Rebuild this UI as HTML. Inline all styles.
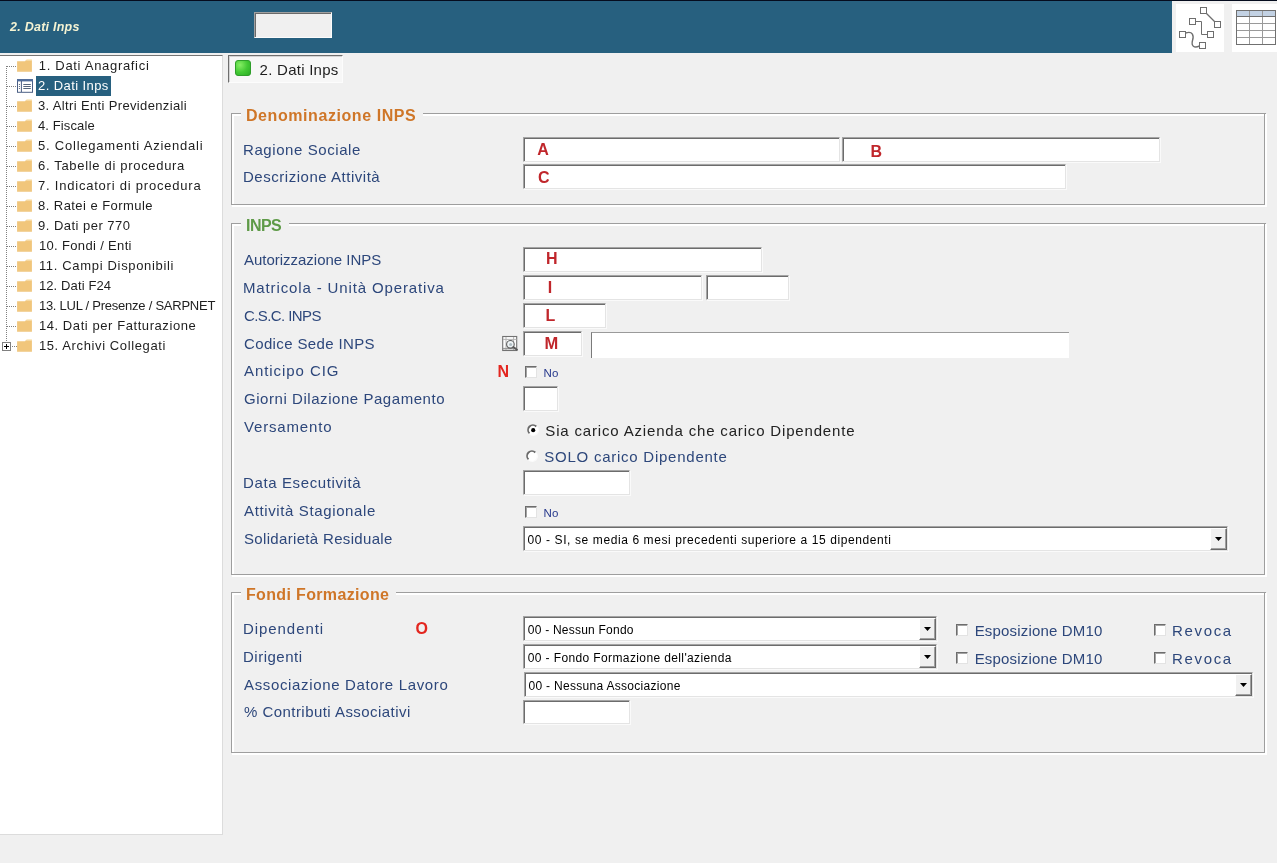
<!DOCTYPE html>
<html lang="it"><head><meta charset="utf-8"><title>2. Dati Inps</title>
<style>
html,body{margin:0;padding:0}
body{width:1277px;height:863px;background:#f0f0f0;position:relative;overflow:hidden;font-family:"Liberation Sans",sans-serif}
</style></head><body>
<div style="position:absolute;left:0px;top:0px;width:1277px;height:1px;background:#050c1e"></div>
<div style="position:absolute;left:0px;top:1px;width:1172px;height:52px;background:#27607f"></div>
<div style="position:absolute;left:254px;top:12px;width:78px;height:26px;box-sizing:border-box;background:#f0f0f0;border:1px solid;border-color:#a0a0a0 #fcfcfc #fcfcfc #a0a0a0;box-shadow:inset 1px 1px 0 #6a6a6a"></div>
<svg width="48" height="48" viewBox="1176 4 48 48" style="position:absolute;left:1176px;top:4px">
<rect x="1176" y="4" width="48" height="48" fill="#fff"/>
<g fill="none" stroke="#6e6e6e" stroke-width="1">
<path d="M1206.5 13.5 L1214.5 21.5" stroke-width="1.3"/>
<path d="M1195.5 21.5 H1201.5 V34.5 H1207.5"/>
<path d="M1185.5 33 C1193 30.5 1194 36 1192.5 40.5 C1191 46 1194 48.5 1199.5 46" stroke-width="1.4"/>
<g fill="#fff">
<rect x="1200.5" y="7.5" width="6" height="6"/>
<rect x="1189.5" y="18.5" width="6" height="6"/>
<rect x="1214.5" y="21.5" width="6" height="6"/>
<rect x="1179.5" y="31.5" width="6" height="6"/>
<rect x="1207.5" y="31.5" width="6" height="6"/>
<rect x="1199.5" y="42.5" width="6" height="6"/>
</g></g></svg>
<svg width="45" height="48" viewBox="1232 4 45 48" style="position:absolute;left:1232px;top:4px">
<rect x="1232" y="4" width="45" height="48" fill="#fff"/>
<rect x="1236.5" y="10.5" width="39" height="6" fill="#c3d2e4"/>
<g fill="none" stroke="#9a9a9a" stroke-width="1">
<path d="M1236.5 23.5 H1275.5 M1236.5 30.5 H1275.5 M1236.5 37.5 H1275.5 M1249.5 10.5 V44.5 M1262.5 10.5 V44.5"/>
</g>
<g fill="none" stroke="#707070" stroke-width="1">
<path d="M1236.5 16.5 H1275.5"/>
<rect x="1236.5" y="10.5" width="39" height="34"/>
</g></svg>
<div style="position:absolute;left:0px;top:55px;width:223px;height:780px;box-sizing:border-box;background:#fff;border-top:1px solid #747474;border-right:1px solid #dcdcdc;border-bottom:1px solid #dcdcdc"></div>
<div style="position:absolute;left:6px;top:66px;width:1px;height:275px;background-image:linear-gradient(to bottom,#808080 50%,transparent 50%);background-size:1px 2px"></div>
<div style="position:absolute;left:7px;top:66px;width:10px;height:1px;background-image:linear-gradient(to right,#808080 50%,transparent 50%);background-size:2px 1px"></div>
<div style="position:absolute;left:7px;top:86px;width:10px;height:1px;background-image:linear-gradient(to right,#808080 50%,transparent 50%);background-size:2px 1px"></div>
<div style="position:absolute;left:7px;top:106px;width:10px;height:1px;background-image:linear-gradient(to right,#808080 50%,transparent 50%);background-size:2px 1px"></div>
<div style="position:absolute;left:7px;top:126px;width:10px;height:1px;background-image:linear-gradient(to right,#808080 50%,transparent 50%);background-size:2px 1px"></div>
<div style="position:absolute;left:7px;top:146px;width:10px;height:1px;background-image:linear-gradient(to right,#808080 50%,transparent 50%);background-size:2px 1px"></div>
<div style="position:absolute;left:7px;top:166px;width:10px;height:1px;background-image:linear-gradient(to right,#808080 50%,transparent 50%);background-size:2px 1px"></div>
<div style="position:absolute;left:7px;top:186px;width:10px;height:1px;background-image:linear-gradient(to right,#808080 50%,transparent 50%);background-size:2px 1px"></div>
<div style="position:absolute;left:7px;top:206px;width:10px;height:1px;background-image:linear-gradient(to right,#808080 50%,transparent 50%);background-size:2px 1px"></div>
<div style="position:absolute;left:7px;top:226px;width:10px;height:1px;background-image:linear-gradient(to right,#808080 50%,transparent 50%);background-size:2px 1px"></div>
<div style="position:absolute;left:7px;top:246px;width:10px;height:1px;background-image:linear-gradient(to right,#808080 50%,transparent 50%);background-size:2px 1px"></div>
<div style="position:absolute;left:7px;top:266px;width:10px;height:1px;background-image:linear-gradient(to right,#808080 50%,transparent 50%);background-size:2px 1px"></div>
<div style="position:absolute;left:7px;top:286px;width:10px;height:1px;background-image:linear-gradient(to right,#808080 50%,transparent 50%);background-size:2px 1px"></div>
<div style="position:absolute;left:7px;top:306px;width:10px;height:1px;background-image:linear-gradient(to right,#808080 50%,transparent 50%);background-size:2px 1px"></div>
<div style="position:absolute;left:7px;top:326px;width:10px;height:1px;background-image:linear-gradient(to right,#808080 50%,transparent 50%);background-size:2px 1px"></div>
<div style="position:absolute;left:12px;top:346px;width:5px;height:1px;background-image:linear-gradient(to right,#808080 50%,transparent 50%);background-size:2px 1px"></div>
<div style="position:absolute;left:36px;top:76px;width:75px;height:20px;background:#27607f"></div>
<svg width="16" height="14" viewBox="0 0 16 14" style="position:absolute;left:17px;top:59px">
<path d="M0.1 2.2 H8.1 L9.0 0.9 H14.9 V12.6 H0.1 Z" fill="#f1c67b"/>
<path d="M9.0 1.5 L9.6 0.1 H14.9 V1.5 Z" fill="#fbecc9"/>
<rect x="0.1" y="11.6" width="14.8" height="1" fill="#f0cb8c"/>
</svg>
<svg width="16" height="14" viewBox="0 0 16 14" style="position:absolute;left:17px;top:99px">
<path d="M0.1 2.2 H8.1 L9.0 0.9 H14.9 V12.6 H0.1 Z" fill="#f1c67b"/>
<path d="M9.0 1.5 L9.6 0.1 H14.9 V1.5 Z" fill="#fbecc9"/>
<rect x="0.1" y="11.6" width="14.8" height="1" fill="#f0cb8c"/>
</svg>
<svg width="16" height="14" viewBox="0 0 16 14" style="position:absolute;left:17px;top:119px">
<path d="M0.1 2.2 H8.1 L9.0 0.9 H14.9 V12.6 H0.1 Z" fill="#f1c67b"/>
<path d="M9.0 1.5 L9.6 0.1 H14.9 V1.5 Z" fill="#fbecc9"/>
<rect x="0.1" y="11.6" width="14.8" height="1" fill="#f0cb8c"/>
</svg>
<svg width="16" height="14" viewBox="0 0 16 14" style="position:absolute;left:17px;top:139px">
<path d="M0.1 2.2 H8.1 L9.0 0.9 H14.9 V12.6 H0.1 Z" fill="#f1c67b"/>
<path d="M9.0 1.5 L9.6 0.1 H14.9 V1.5 Z" fill="#fbecc9"/>
<rect x="0.1" y="11.6" width="14.8" height="1" fill="#f0cb8c"/>
</svg>
<svg width="16" height="14" viewBox="0 0 16 14" style="position:absolute;left:17px;top:159px">
<path d="M0.1 2.2 H8.1 L9.0 0.9 H14.9 V12.6 H0.1 Z" fill="#f1c67b"/>
<path d="M9.0 1.5 L9.6 0.1 H14.9 V1.5 Z" fill="#fbecc9"/>
<rect x="0.1" y="11.6" width="14.8" height="1" fill="#f0cb8c"/>
</svg>
<svg width="16" height="14" viewBox="0 0 16 14" style="position:absolute;left:17px;top:179px">
<path d="M0.1 2.2 H8.1 L9.0 0.9 H14.9 V12.6 H0.1 Z" fill="#f1c67b"/>
<path d="M9.0 1.5 L9.6 0.1 H14.9 V1.5 Z" fill="#fbecc9"/>
<rect x="0.1" y="11.6" width="14.8" height="1" fill="#f0cb8c"/>
</svg>
<svg width="16" height="14" viewBox="0 0 16 14" style="position:absolute;left:17px;top:199px">
<path d="M0.1 2.2 H8.1 L9.0 0.9 H14.9 V12.6 H0.1 Z" fill="#f1c67b"/>
<path d="M9.0 1.5 L9.6 0.1 H14.9 V1.5 Z" fill="#fbecc9"/>
<rect x="0.1" y="11.6" width="14.8" height="1" fill="#f0cb8c"/>
</svg>
<svg width="16" height="14" viewBox="0 0 16 14" style="position:absolute;left:17px;top:219px">
<path d="M0.1 2.2 H8.1 L9.0 0.9 H14.9 V12.6 H0.1 Z" fill="#f1c67b"/>
<path d="M9.0 1.5 L9.6 0.1 H14.9 V1.5 Z" fill="#fbecc9"/>
<rect x="0.1" y="11.6" width="14.8" height="1" fill="#f0cb8c"/>
</svg>
<svg width="16" height="14" viewBox="0 0 16 14" style="position:absolute;left:17px;top:239px">
<path d="M0.1 2.2 H8.1 L9.0 0.9 H14.9 V12.6 H0.1 Z" fill="#f1c67b"/>
<path d="M9.0 1.5 L9.6 0.1 H14.9 V1.5 Z" fill="#fbecc9"/>
<rect x="0.1" y="11.6" width="14.8" height="1" fill="#f0cb8c"/>
</svg>
<svg width="16" height="14" viewBox="0 0 16 14" style="position:absolute;left:17px;top:259px">
<path d="M0.1 2.2 H8.1 L9.0 0.9 H14.9 V12.6 H0.1 Z" fill="#f1c67b"/>
<path d="M9.0 1.5 L9.6 0.1 H14.9 V1.5 Z" fill="#fbecc9"/>
<rect x="0.1" y="11.6" width="14.8" height="1" fill="#f0cb8c"/>
</svg>
<svg width="16" height="14" viewBox="0 0 16 14" style="position:absolute;left:17px;top:279px">
<path d="M0.1 2.2 H8.1 L9.0 0.9 H14.9 V12.6 H0.1 Z" fill="#f1c67b"/>
<path d="M9.0 1.5 L9.6 0.1 H14.9 V1.5 Z" fill="#fbecc9"/>
<rect x="0.1" y="11.6" width="14.8" height="1" fill="#f0cb8c"/>
</svg>
<svg width="16" height="14" viewBox="0 0 16 14" style="position:absolute;left:17px;top:299px">
<path d="M0.1 2.2 H8.1 L9.0 0.9 H14.9 V12.6 H0.1 Z" fill="#f1c67b"/>
<path d="M9.0 1.5 L9.6 0.1 H14.9 V1.5 Z" fill="#fbecc9"/>
<rect x="0.1" y="11.6" width="14.8" height="1" fill="#f0cb8c"/>
</svg>
<svg width="16" height="14" viewBox="0 0 16 14" style="position:absolute;left:17px;top:319px">
<path d="M0.1 2.2 H8.1 L9.0 0.9 H14.9 V12.6 H0.1 Z" fill="#f1c67b"/>
<path d="M9.0 1.5 L9.6 0.1 H14.9 V1.5 Z" fill="#fbecc9"/>
<rect x="0.1" y="11.6" width="14.8" height="1" fill="#f0cb8c"/>
</svg>
<svg width="16" height="14" viewBox="0 0 16 14" style="position:absolute;left:17px;top:339px">
<path d="M0.1 2.2 H8.1 L9.0 0.9 H14.9 V12.6 H0.1 Z" fill="#f1c67b"/>
<path d="M9.0 1.5 L9.6 0.1 H14.9 V1.5 Z" fill="#fbecc9"/>
<rect x="0.1" y="11.6" width="14.8" height="1" fill="#f0cb8c"/>
</svg>
<svg width="17" height="15" viewBox="0 0 17 15" style="position:absolute;left:17px;top:79px">
<rect x="0.5" y="0.7" width="15" height="12.6" fill="#fff" stroke="#4b5f85"/>
<rect x="0" y="0.2" width="16" height="2.2" fill="#4f6c9c"/>
<path d="M4.4 2 V13" stroke="#4b5f85" fill="none"/>
<path d="M6.3 5.5 H13.8 M6.3 7.5 H13.8 M6.3 9.5 H13.8" stroke="#56657c" fill="none" stroke-width="1"/>
<path d="M1.9 5.5 H2.9 M1.9 7.5 H2.9 M1.9 9.5 H2.9" stroke="#56657c" fill="none" stroke-width="1"/>
</svg>
<svg width="9" height="9" viewBox="0 0 9 9" style="position:absolute;left:2px;top:342px">
<rect x="0.5" y="0.5" width="8" height="8" fill="#fff" stroke="#808080"/>
<path d="M2 4.5 H7 M4.5 2 V7" stroke="#000" fill="none"/></svg>
<div style="position:absolute;left:228px;top:55px;width:115px;height:28px;box-sizing:border-box;background:#f7f7f7;border:1px solid;border-color:#6e6e6e #fcfcfc #fcfcfc #6e6e6e;box-shadow:inset 1px 1px 0 #d4d4d4"></div>
<svg width="18" height="18" viewBox="0 0 18 18" style="position:absolute;left:234.3px;top:59px">
<defs><radialGradient id="gg" cx="0.3" cy="0.3" r="0.9"><stop offset="0" stop-color="#86ee64"/><stop offset="0.55" stop-color="#43c934"/><stop offset="1" stop-color="#2cae25"/></radialGradient></defs>
<rect x="1.5" y="1.5" width="15" height="15" rx="2.5" fill="url(#gg)" stroke="#2f9e2a" stroke-width="1"/></svg>
<div style="position:absolute;left:232px;top:114px;width:1035px;height:93px;box-sizing:border-box;border:2px solid #ffffff"></div>
<div style="position:absolute;left:231px;top:113px;width:1034px;height:92px;box-sizing:border-box;border:1px solid #9e9e9e"></div>
<div style="position:absolute;left:1264px;top:113px;width:2px;height:1px;background:#9e9e9e"></div>
<div style="position:absolute;left:241px;top:112px;width:182px;height:5px;background:#f0f0f0"></div>
<div style="position:absolute;left:232px;top:224px;width:1035px;height:353px;box-sizing:border-box;border:2px solid #ffffff"></div>
<div style="position:absolute;left:231px;top:223px;width:1034px;height:352px;box-sizing:border-box;border:1px solid #9e9e9e"></div>
<div style="position:absolute;left:1264px;top:223px;width:2px;height:1px;background:#9e9e9e"></div>
<div style="position:absolute;left:241px;top:222px;width:48px;height:5px;background:#f0f0f0"></div>
<div style="position:absolute;left:232px;top:593px;width:1035px;height:162px;box-sizing:border-box;border:2px solid #ffffff"></div>
<div style="position:absolute;left:231px;top:592px;width:1034px;height:161px;box-sizing:border-box;border:1px solid #9e9e9e"></div>
<div style="position:absolute;left:1264px;top:592px;width:2px;height:1px;background:#9e9e9e"></div>
<div style="position:absolute;left:241px;top:591px;width:155px;height:5px;background:#f0f0f0"></div>
<div style="position:absolute;left:523px;top:137px;width:317px;height:25px;box-sizing:border-box;background:#fff;border:1px solid;border-color:#a4a4a4 #e4e4e4 #e4e4e4 #a4a4a4;box-shadow:inset 1px 1px 0 #6c6c6c, 1px 1px 0 #fafafa"></div>
<div style="position:absolute;left:842px;top:137px;width:318px;height:25px;box-sizing:border-box;background:#fff;border:1px solid;border-color:#a4a4a4 #e4e4e4 #e4e4e4 #a4a4a4;box-shadow:inset 1px 1px 0 #6c6c6c, 1px 1px 0 #fafafa"></div>
<div style="position:absolute;left:523px;top:164px;width:543px;height:25px;box-sizing:border-box;background:#fff;border:1px solid;border-color:#a4a4a4 #e4e4e4 #e4e4e4 #a4a4a4;box-shadow:inset 1px 1px 0 #6c6c6c, 1px 1px 0 #fafafa"></div>
<div style="position:absolute;left:523px;top:247px;width:239px;height:25px;box-sizing:border-box;background:#fff;border:1px solid;border-color:#a4a4a4 #e4e4e4 #e4e4e4 #a4a4a4;box-shadow:inset 1px 1px 0 #6c6c6c, 1px 1px 0 #fafafa"></div>
<div style="position:absolute;left:523px;top:275px;width:179px;height:25px;box-sizing:border-box;background:#fff;border:1px solid;border-color:#a4a4a4 #e4e4e4 #e4e4e4 #a4a4a4;box-shadow:inset 1px 1px 0 #6c6c6c, 1px 1px 0 #fafafa"></div>
<div style="position:absolute;left:706px;top:275px;width:83px;height:25px;box-sizing:border-box;background:#fff;border:1px solid;border-color:#a4a4a4 #e4e4e4 #e4e4e4 #a4a4a4;box-shadow:inset 1px 1px 0 #6c6c6c, 1px 1px 0 #fafafa"></div>
<div style="position:absolute;left:523px;top:303px;width:83px;height:25px;box-sizing:border-box;background:#fff;border:1px solid;border-color:#a4a4a4 #e4e4e4 #e4e4e4 #a4a4a4;box-shadow:inset 1px 1px 0 #6c6c6c, 1px 1px 0 #fafafa"></div>
<div style="position:absolute;left:523px;top:331px;width:59px;height:25px;box-sizing:border-box;background:#fff;border:1px solid;border-color:#a4a4a4 #e4e4e4 #e4e4e4 #a4a4a4;box-shadow:inset 1px 1px 0 #6c6c6c, 1px 1px 0 #fafafa"></div>
<div style="position:absolute;left:591px;top:332px;width:478px;height:26px;box-sizing:border-box;background:#fff;border-style:solid;border-width:1px 0 0 1px;border-color:#9a9a9a #fff #fff #7a7a7a"></div>
<div style="position:absolute;left:523px;top:386px;width:35px;height:25px;box-sizing:border-box;background:#fff;border:1px solid;border-color:#a4a4a4 #e4e4e4 #e4e4e4 #a4a4a4;box-shadow:inset 1px 1px 0 #6c6c6c, 1px 1px 0 #fafafa"></div>
<div style="position:absolute;left:523px;top:470px;width:107px;height:25px;box-sizing:border-box;background:#fff;border:1px solid;border-color:#a4a4a4 #e4e4e4 #e4e4e4 #a4a4a4;box-shadow:inset 1px 1px 0 #6c6c6c, 1px 1px 0 #fafafa"></div>
<div style="position:absolute;left:523px;top:700px;width:107px;height:24px;box-sizing:border-box;background:#fff;border:1px solid;border-color:#a4a4a4 #e4e4e4 #e4e4e4 #a4a4a4;box-shadow:inset 1px 1px 0 #6c6c6c, 1px 1px 0 #fafafa"></div>
<div style="position:absolute;left:523px;top:526px;width:705px;height:25px;box-sizing:border-box;background:#fff;border:1px solid;border-color:#a4a4a4 #e4e4e4 #e4e4e4 #a4a4a4;box-shadow:inset 1px 1px 0 #6c6c6c, 1px 1px 0 #fafafa"></div>
<div style="position:absolute;left:1210px;top:528px;width:17px;height:22px;box-sizing:border-box;background:#f0f0f0;border:1px solid;border-color:#ffffff #696969 #696969 #ffffff;box-shadow:inset -1px -1px 0 #a0a0a0"><svg width="7" height="4" viewBox="0 0 7 4" style="position:absolute;left:4px;top:8px"><path d="M0 0 H7 L3.5 4 Z" fill="#000"/></svg></div>
<div style="position:absolute;left:523px;top:616px;width:414px;height:25px;box-sizing:border-box;background:#fff;border:1px solid;border-color:#a4a4a4 #e4e4e4 #e4e4e4 #a4a4a4;box-shadow:inset 1px 1px 0 #6c6c6c, 1px 1px 0 #fafafa"></div>
<div style="position:absolute;left:919px;top:618px;width:17px;height:22px;box-sizing:border-box;background:#f0f0f0;border:1px solid;border-color:#ffffff #696969 #696969 #ffffff;box-shadow:inset -1px -1px 0 #a0a0a0"><svg width="7" height="4" viewBox="0 0 7 4" style="position:absolute;left:4px;top:8px"><path d="M0 0 H7 L3.5 4 Z" fill="#000"/></svg></div>
<div style="position:absolute;left:523px;top:644px;width:414px;height:25px;box-sizing:border-box;background:#fff;border:1px solid;border-color:#a4a4a4 #e4e4e4 #e4e4e4 #a4a4a4;box-shadow:inset 1px 1px 0 #6c6c6c, 1px 1px 0 #fafafa"></div>
<div style="position:absolute;left:919px;top:646px;width:17px;height:22px;box-sizing:border-box;background:#f0f0f0;border:1px solid;border-color:#ffffff #696969 #696969 #ffffff;box-shadow:inset -1px -1px 0 #a0a0a0"><svg width="7" height="4" viewBox="0 0 7 4" style="position:absolute;left:4px;top:8px"><path d="M0 0 H7 L3.5 4 Z" fill="#000"/></svg></div>
<div style="position:absolute;left:524px;top:672px;width:729px;height:25px;box-sizing:border-box;background:#fff;border:1px solid;border-color:#a4a4a4 #e4e4e4 #e4e4e4 #a4a4a4;box-shadow:inset 1px 1px 0 #6c6c6c, 1px 1px 0 #fafafa"></div>
<div style="position:absolute;left:1235px;top:674px;width:17px;height:22px;box-sizing:border-box;background:#f0f0f0;border:1px solid;border-color:#ffffff #696969 #696969 #ffffff;box-shadow:inset -1px -1px 0 #a0a0a0"><svg width="7" height="4" viewBox="0 0 7 4" style="position:absolute;left:4px;top:8px"><path d="M0 0 H7 L3.5 4 Z" fill="#000"/></svg></div>
<svg width="20" height="20" viewBox="500 334 20 20" style="position:absolute;left:500px;top:334px">
<rect x="502.7" y="336.5" width="14" height="14" fill="#fdfdfd" stroke="#727272" stroke-width="1.1"/>
<path d="M503 339.4 H516.5 M503 348.3 H516.5 M506 337 V350 M513.6 337 V350" stroke="#b4b4b4" stroke-width="1" fill="none"/>
<path d="M503 348.8 H516.5" stroke="#8a8a8a" stroke-width="1" fill="none"/>
<circle cx="510.4" cy="344.3" r="3.8" fill="#eef3f5" stroke="#5c5c5c" stroke-width="1.1"/>
<circle cx="510.6" cy="344.5" r="1.5" fill="#aebcc2"/>
<path d="M513.3 347 L517 349.7" stroke="#5a5a5a" stroke-width="2" fill="none" stroke-linecap="round"/>
</svg>
<div style="position:absolute;left:525px;top:366px;width:12px;height:12px;box-sizing:border-box;background:#fff;border:1px solid;border-color:#6d6d6d #e3e3e3 #e3e3e3 #6d6d6d;box-shadow:inset 1px 1px 0 #a3a3a3"></div>
<div style="position:absolute;left:525px;top:506px;width:12px;height:12px;box-sizing:border-box;background:#fff;border:1px solid;border-color:#6d6d6d #e3e3e3 #e3e3e3 #6d6d6d;box-shadow:inset 1px 1px 0 #a3a3a3"></div>
<div style="position:absolute;left:956px;top:624px;width:12px;height:12px;box-sizing:border-box;background:#fff;border:1px solid;border-color:#6d6d6d #e3e3e3 #e3e3e3 #6d6d6d;box-shadow:inset 1px 1px 0 #a3a3a3"></div>
<div style="position:absolute;left:1154px;top:624px;width:12px;height:12px;box-sizing:border-box;background:#fff;border:1px solid;border-color:#6d6d6d #e3e3e3 #e3e3e3 #6d6d6d;box-shadow:inset 1px 1px 0 #a3a3a3"></div>
<div style="position:absolute;left:956px;top:652px;width:12px;height:12px;box-sizing:border-box;background:#fff;border:1px solid;border-color:#6d6d6d #e3e3e3 #e3e3e3 #6d6d6d;box-shadow:inset 1px 1px 0 #a3a3a3"></div>
<div style="position:absolute;left:1154px;top:652px;width:12px;height:12px;box-sizing:border-box;background:#fff;border:1px solid;border-color:#6d6d6d #e3e3e3 #e3e3e3 #6d6d6d;box-shadow:inset 1px 1px 0 #a3a3a3"></div>
<svg width="13" height="13" viewBox="0 0 13 13" style="position:absolute;left:526.8px;top:423.7px">
<circle cx="6" cy="6" r="5.2" fill="#fff"/>
<path d="M2.5 9.3 A4.8 4.8 0 0 1 9.3 2.5" stroke="#6a6a6a" stroke-width="1.8" fill="none"/>
<path d="M9.9 2.6 A5.1 5.1 0 0 1 2.6 9.9" stroke="#fbfbfb" stroke-width="1.2" fill="none"/>
<circle cx="6.2" cy="6.2" r="2.1" fill="#000"/></svg>
<svg width="13" height="13" viewBox="0 0 13 13" style="position:absolute;left:525.7px;top:449.6px">
<circle cx="6" cy="6" r="5.2" fill="#fff"/>
<path d="M2.5 9.3 A4.8 4.8 0 0 1 9.3 2.5" stroke="#6a6a6a" stroke-width="1.8" fill="none"/>
<path d="M9.9 2.6 A5.1 5.1 0 0 1 2.6 9.9" stroke="#fbfbfb" stroke-width="1.2" fill="none"/>
</svg>
<div style="position:absolute;left:0;top:0;width:1277px;height:863px;will-change:transform">
<span style="position:absolute;left:10.00px;top:20px;line-height:14px;height:14px;font-size:12.5px;font-weight:bold;font-style:italic;color:#f4f3d3;letter-spacing:0.252px;font-family:"Liberation Sans",sans-serif;white-space:pre">2. Dati Inps</span>
<span style="position:absolute;left:38.80px;top:58px;line-height:15px;height:15px;font-size:13px;font-weight:normal;font-style:normal;color:#1e1e1e;letter-spacing:0.688px;font-family:"Liberation Sans",sans-serif;white-space:pre">1. Dati Anagrafici</span>
<span style="position:absolute;left:38.00px;top:78px;line-height:15px;height:15px;font-size:13px;font-weight:normal;font-style:normal;color:#ffffff;letter-spacing:0.413px;font-family:"Liberation Sans",sans-serif;white-space:pre">2. Dati Inps</span>
<span style="position:absolute;left:38.00px;top:98px;line-height:15px;height:15px;font-size:13px;font-weight:normal;font-style:normal;color:#1e1e1e;letter-spacing:0.355px;font-family:"Liberation Sans",sans-serif;white-space:pre">3. Altri Enti Previdenziali</span>
<span style="position:absolute;left:38.00px;top:118px;line-height:15px;height:15px;font-size:13px;font-weight:normal;font-style:normal;color:#1e1e1e;letter-spacing:0.111px;font-family:"Liberation Sans",sans-serif;white-space:pre">4. Fiscale</span>
<span style="position:absolute;left:38.00px;top:138px;line-height:15px;height:15px;font-size:13px;font-weight:normal;font-style:normal;color:#1e1e1e;letter-spacing:0.779px;font-family:"Liberation Sans",sans-serif;white-space:pre">5. Collegamenti Aziendali</span>
<span style="position:absolute;left:38.00px;top:158px;line-height:15px;height:15px;font-size:13px;font-weight:normal;font-style:normal;color:#1e1e1e;letter-spacing:0.682px;font-family:"Liberation Sans",sans-serif;white-space:pre">6. Tabelle di procedura</span>
<span style="position:absolute;left:38.00px;top:178px;line-height:15px;height:15px;font-size:13px;font-weight:normal;font-style:normal;color:#1e1e1e;letter-spacing:0.782px;font-family:"Liberation Sans",sans-serif;white-space:pre">7. Indicatori di procedura</span>
<span style="position:absolute;left:38.00px;top:198px;line-height:15px;height:15px;font-size:13px;font-weight:normal;font-style:normal;color:#1e1e1e;letter-spacing:0.447px;font-family:"Liberation Sans",sans-serif;white-space:pre">8. Ratei e Formule</span>
<span style="position:absolute;left:38.00px;top:218px;line-height:15px;height:15px;font-size:13px;font-weight:normal;font-style:normal;color:#1e1e1e;letter-spacing:0.475px;font-family:"Liberation Sans",sans-serif;white-space:pre">9. Dati per 770</span>
<span style="position:absolute;left:38.90px;top:238px;line-height:15px;height:15px;font-size:13px;font-weight:normal;font-style:normal;color:#1e1e1e;letter-spacing:0.343px;font-family:"Liberation Sans",sans-serif;white-space:pre">10. Fondi / Enti</span>
<span style="position:absolute;left:38.90px;top:258px;line-height:15px;height:15px;font-size:13px;font-weight:normal;font-style:normal;color:#1e1e1e;letter-spacing:0.672px;font-family:"Liberation Sans",sans-serif;white-space:pre">11. Campi Disponibili</span>
<span style="position:absolute;left:38.90px;top:278px;line-height:15px;height:15px;font-size:13px;font-weight:normal;font-style:normal;color:#1e1e1e;letter-spacing:0.120px;font-family:"Liberation Sans",sans-serif;white-space:pre">12. Dati F24</span>
<span style="position:absolute;left:38.90px;top:298px;line-height:15px;height:15px;font-size:13px;font-weight:normal;font-style:normal;color:#1e1e1e;letter-spacing:-0.244px;font-family:"Liberation Sans",sans-serif;white-space:pre">13. LUL / Presenze / SARPNET</span>
<span style="position:absolute;left:38.90px;top:318px;line-height:15px;height:15px;font-size:13px;font-weight:normal;font-style:normal;color:#1e1e1e;letter-spacing:0.573px;font-family:"Liberation Sans",sans-serif;white-space:pre">14. Dati per Fatturazione</span>
<span style="position:absolute;left:38.90px;top:338px;line-height:15px;height:15px;font-size:13px;font-weight:normal;font-style:normal;color:#1e1e1e;letter-spacing:0.615px;font-family:"Liberation Sans",sans-serif;white-space:pre">15. Archivi Collegati</span>
<span style="position:absolute;left:259.60px;top:61px;line-height:17px;height:17px;font-size:15px;font-weight:normal;font-style:normal;color:#1e1e1e;letter-spacing:0.257px;font-family:"Liberation Sans",sans-serif;white-space:pre">2. Dati Inps</span>
<span style="position:absolute;left:246.00px;top:107px;line-height:17px;height:17px;font-size:16px;font-weight:bold;font-style:normal;color:#cf7628;letter-spacing:0.568px;font-family:"Liberation Sans",sans-serif;white-space:pre">Denominazione INPS</span>
<span style="position:absolute;left:246.00px;top:217px;line-height:17px;height:17px;font-size:16px;font-weight:bold;font-style:normal;color:#5e9a47;letter-spacing:-0.557px;font-family:"Liberation Sans",sans-serif;white-space:pre">INPS</span>
<span style="position:absolute;left:246.00px;top:586px;line-height:17px;height:17px;font-size:16px;font-weight:bold;font-style:normal;color:#cf7628;letter-spacing:0.342px;font-family:"Liberation Sans",sans-serif;white-space:pre">Fondi Formazione</span>
<span style="position:absolute;left:243.00px;top:141px;line-height:17px;height:17px;font-size:15px;font-weight:normal;font-style:normal;color:#2d477b;letter-spacing:0.579px;font-family:"Liberation Sans",sans-serif;white-space:pre">Ragione Sociale</span>
<span style="position:absolute;left:243.00px;top:168px;line-height:17px;height:17px;font-size:15px;font-weight:normal;font-style:normal;color:#2d477b;letter-spacing:0.526px;font-family:"Liberation Sans",sans-serif;white-space:pre">Descrizione Attività</span>
<span style="position:absolute;left:244.00px;top:251px;line-height:17px;height:17px;font-size:15px;font-weight:normal;font-style:normal;color:#2d477b;letter-spacing:-0.020px;font-family:"Liberation Sans",sans-serif;white-space:pre">Autorizzazione INPS</span>
<span style="position:absolute;left:243.00px;top:279px;line-height:17px;height:17px;font-size:15px;font-weight:normal;font-style:normal;color:#2d477b;letter-spacing:0.867px;font-family:"Liberation Sans",sans-serif;white-space:pre">Matricola - Unità Operativa</span>
<span style="position:absolute;left:244.00px;top:307px;line-height:17px;height:17px;font-size:15px;font-weight:normal;font-style:normal;color:#2d477b;letter-spacing:-0.584px;font-family:"Liberation Sans",sans-serif;white-space:pre">C.S.C. INPS</span>
<span style="position:absolute;left:244.00px;top:335px;line-height:17px;height:17px;font-size:15px;font-weight:normal;font-style:normal;color:#2d477b;letter-spacing:0.362px;font-family:"Liberation Sans",sans-serif;white-space:pre">Codice Sede INPS</span>
<span style="position:absolute;left:244.00px;top:362px;line-height:17px;height:17px;font-size:15px;font-weight:normal;font-style:normal;color:#2d477b;letter-spacing:0.933px;font-family:"Liberation Sans",sans-serif;white-space:pre">Anticipo CIG</span>
<span style="position:absolute;left:244.00px;top:390px;line-height:17px;height:17px;font-size:15px;font-weight:normal;font-style:normal;color:#2d477b;letter-spacing:0.551px;font-family:"Liberation Sans",sans-serif;white-space:pre">Giorni Dilazione Pagamento</span>
<span style="position:absolute;left:244.00px;top:418px;line-height:17px;height:17px;font-size:15px;font-weight:normal;font-style:normal;color:#2d477b;letter-spacing:0.833px;font-family:"Liberation Sans",sans-serif;white-space:pre">Versamento</span>
<span style="position:absolute;left:243.00px;top:474px;line-height:17px;height:17px;font-size:15px;font-weight:normal;font-style:normal;color:#2d477b;letter-spacing:0.617px;font-family:"Liberation Sans",sans-serif;white-space:pre">Data Esecutività</span>
<span style="position:absolute;left:244.00px;top:502px;line-height:17px;height:17px;font-size:15px;font-weight:normal;font-style:normal;color:#2d477b;letter-spacing:0.626px;font-family:"Liberation Sans",sans-serif;white-space:pre">Attività Stagionale</span>
<span style="position:absolute;left:244.00px;top:530px;line-height:17px;height:17px;font-size:15px;font-weight:normal;font-style:normal;color:#2d477b;letter-spacing:0.329px;font-family:"Liberation Sans",sans-serif;white-space:pre">Solidarietà Residuale</span>
<span style="position:absolute;left:243.00px;top:620px;line-height:17px;height:17px;font-size:15px;font-weight:normal;font-style:normal;color:#2d477b;letter-spacing:0.935px;font-family:"Liberation Sans",sans-serif;white-space:pre">Dipendenti</span>
<span style="position:absolute;left:243.00px;top:648px;line-height:17px;height:17px;font-size:15px;font-weight:normal;font-style:normal;color:#2d477b;letter-spacing:0.502px;font-family:"Liberation Sans",sans-serif;white-space:pre">Dirigenti</span>
<span style="position:absolute;left:244.00px;top:676px;line-height:17px;height:17px;font-size:15px;font-weight:normal;font-style:normal;color:#2d477b;letter-spacing:0.646px;font-family:"Liberation Sans",sans-serif;white-space:pre">Associazione Datore Lavoro</span>
<span style="position:absolute;left:244.00px;top:703px;line-height:17px;height:17px;font-size:15px;font-weight:normal;font-style:normal;color:#2d477b;letter-spacing:0.453px;font-family:"Liberation Sans",sans-serif;white-space:pre">% Contributi Associativi</span>
<span style="position:absolute;left:545.30px;top:422px;line-height:17px;height:17px;font-size:15px;font-weight:normal;font-style:normal;color:#222;letter-spacing:0.830px;font-family:"Liberation Sans",sans-serif;white-space:pre">Sia carico Azienda che carico Dipendente</span>
<span style="position:absolute;left:544.30px;top:448px;line-height:17px;height:17px;font-size:15px;font-weight:normal;font-style:normal;color:#2d477b;letter-spacing:0.752px;font-family:"Liberation Sans",sans-serif;white-space:pre">SOLO carico Dipendente</span>
<span style="position:absolute;left:974.70px;top:622px;line-height:17px;height:17px;font-size:15px;font-weight:normal;font-style:normal;color:#2d477b;letter-spacing:0.172px;font-family:"Liberation Sans",sans-serif;white-space:pre">Esposizione DM10</span>
<span style="position:absolute;left:1172.00px;top:622px;line-height:17px;height:17px;font-size:15px;font-weight:normal;font-style:normal;color:#2d477b;letter-spacing:1.657px;font-family:"Liberation Sans",sans-serif;white-space:pre">Revoca</span>
<span style="position:absolute;left:974.70px;top:650px;line-height:17px;height:17px;font-size:15px;font-weight:normal;font-style:normal;color:#2d477b;letter-spacing:0.172px;font-family:"Liberation Sans",sans-serif;white-space:pre">Esposizione DM10</span>
<span style="position:absolute;left:1172.00px;top:650px;line-height:17px;height:17px;font-size:15px;font-weight:normal;font-style:normal;color:#2d477b;letter-spacing:1.657px;font-family:"Liberation Sans",sans-serif;white-space:pre">Revoca</span>
<span style="position:absolute;left:543.60px;top:367px;line-height:12px;height:12px;font-size:11.5px;font-weight:normal;font-style:normal;color:#26388c;letter-spacing:-0.005px;font-family:"Liberation Sans",sans-serif;white-space:pre">No</span>
<span style="position:absolute;left:543.60px;top:507px;line-height:12px;height:12px;font-size:11.5px;font-weight:normal;font-style:normal;color:#26388c;letter-spacing:-0.005px;font-family:"Liberation Sans",sans-serif;white-space:pre">No</span>
<span style="position:absolute;left:537.20px;top:141px;line-height:17px;height:17px;font-size:16px;font-weight:bold;font-style:normal;color:#c0262b;letter-spacing:0.000px;font-family:"Liberation Sans",sans-serif;white-space:pre">A</span>
<span style="position:absolute;left:870.40px;top:143px;line-height:17px;height:17px;font-size:16px;font-weight:bold;font-style:normal;color:#c0262b;letter-spacing:0.000px;font-family:"Liberation Sans",sans-serif;white-space:pre">B</span>
<span style="position:absolute;left:537.90px;top:169px;line-height:17px;height:17px;font-size:16px;font-weight:bold;font-style:normal;color:#c0262b;letter-spacing:0.000px;font-family:"Liberation Sans",sans-serif;white-space:pre">C</span>
<span style="position:absolute;left:546.00px;top:250px;line-height:17px;height:17px;font-size:16px;font-weight:bold;font-style:normal;color:#c0262b;letter-spacing:0.000px;font-family:"Liberation Sans",sans-serif;white-space:pre">H</span>
<span style="position:absolute;left:547.80px;top:279px;line-height:17px;height:17px;font-size:16px;font-weight:bold;font-style:normal;color:#c0262b;letter-spacing:0.000px;font-family:"Liberation Sans",sans-serif;white-space:pre">I</span>
<span style="position:absolute;left:545.60px;top:307px;line-height:17px;height:17px;font-size:16px;font-weight:bold;font-style:normal;color:#c0262b;letter-spacing:0.000px;font-family:"Liberation Sans",sans-serif;white-space:pre">L</span>
<span style="position:absolute;left:544.50px;top:334px;line-height:18px;height:18px;font-size:16.5px;font-weight:bold;font-style:normal;color:#c0262b;letter-spacing:0.000px;font-family:"Liberation Sans",sans-serif;white-space:pre">M</span>
<span style="position:absolute;left:497.40px;top:363px;line-height:17px;height:17px;font-size:16px;font-weight:bold;font-style:normal;color:#e3261f;letter-spacing:0.000px;font-family:"Liberation Sans",sans-serif;white-space:pre">N</span>
<span style="position:absolute;left:415.60px;top:620px;line-height:17px;height:17px;font-size:16px;font-weight:bold;font-style:normal;color:#e3261f;letter-spacing:0.000px;font-family:"Liberation Sans",sans-serif;white-space:pre">O</span>
<span style="position:absolute;left:527.60px;top:533px;line-height:14px;height:14px;font-size:12px;font-weight:normal;font-style:normal;color:#000;letter-spacing:0.597px;font-family:"Liberation Sans",sans-serif;white-space:pre">00 - SI, se media 6 mesi precedenti superiore a 15 dipendenti</span>
<span style="position:absolute;left:527.80px;top:623px;line-height:14px;height:14px;font-size:12px;font-weight:normal;font-style:normal;color:#000;letter-spacing:0.226px;font-family:"Liberation Sans",sans-serif;white-space:pre">00 - Nessun Fondo</span>
<span style="position:absolute;left:527.80px;top:651px;line-height:14px;height:14px;font-size:12px;font-weight:normal;font-style:normal;color:#000;letter-spacing:0.379px;font-family:"Liberation Sans",sans-serif;white-space:pre">00 - Fondo Formazione dell'azienda</span>
<span style="position:absolute;left:528.50px;top:679px;line-height:14px;height:14px;font-size:12px;font-weight:normal;font-style:normal;color:#000;letter-spacing:0.298px;font-family:"Liberation Sans",sans-serif;white-space:pre">00 - Nessuna Associazione</span>
</div>
</body></html>
